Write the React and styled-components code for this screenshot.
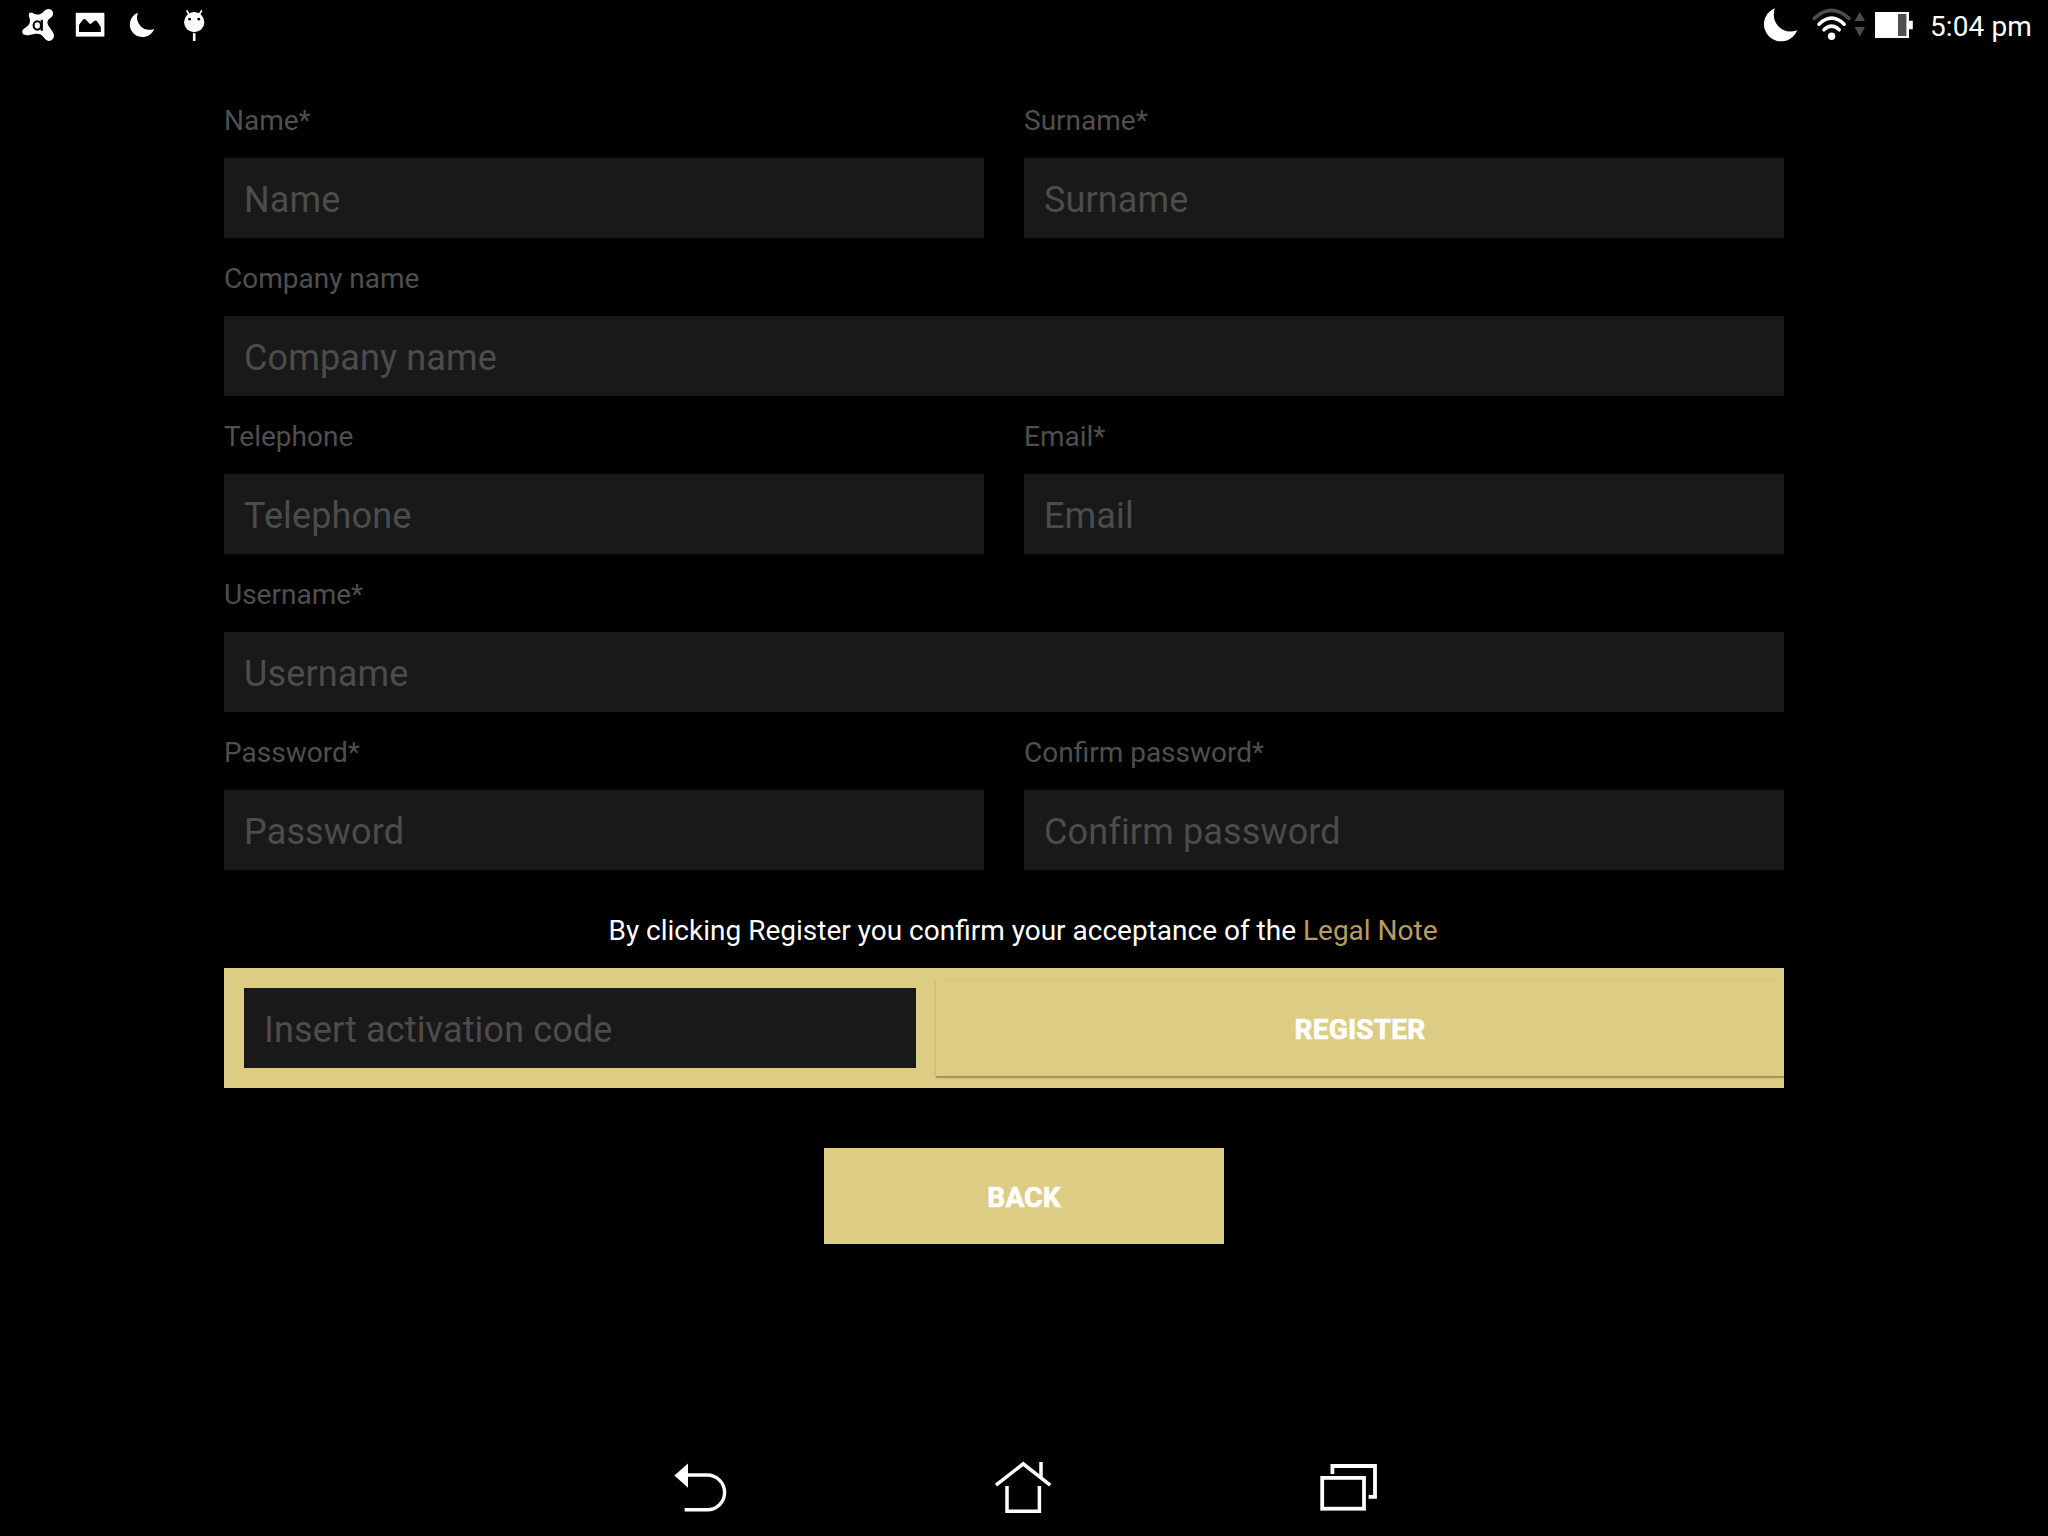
import React from "react";
import styled, { createGlobalStyle } from "styled-components";

const GlobalStyle = createGlobalStyle`
  * { box-sizing: border-box; }
  body { margin: 0; background: #000; font-family: Roboto, sans-serif; color: #fff; }
`;

const Screen = styled.div`
  width: 2048px;
  height: 1536px;
  background: #000;
  display: flex;
  flex-direction: column;
  overflow: hidden;
`;

const StatusBar = styled.header`
  height: 50px;
  flex: none;
  display: flex;
  justify-content: space-between;
  padding: 0 17px 0 12px;
`;

const Cluster = styled.div`
  display: flex;
`;

const Glyph = styled.svg`
  display: block;
  flex: none;
  width: ${(p) => p.$w}px;
  height: ${(p) => p.$h}px;
`;

const Clock = styled.time`
  width: 101px;
  font-size: 28px;
  line-height: 54px;
  letter-spacing: 0.1px;
  white-space: nowrap;
`;

const Content = styled.main`
  flex: 1;
  padding: 50px 224px 0;
`;

const Form = styled.form`
  display: flex;
  flex-direction: column;
`;

const Row = styled.div`
  display: flex;
  gap: 40px;
  width: 1560px;
  height: 158px;
`;

const Field = styled.label`
  flex: 1;
  display: flex;
  flex-direction: column;
  padding-top: 4px;
`;

const Caption = styled.span`
  height: 54px;
  font-size: 28px;
  line-height: 33px;
  color: #4f4f4f;
`;

const Input = styled.input`
  height: 80px;
  width: ${(p) => p.$w || "100%"};
  padding: 3px 20px 0;
  border: 0;
  border-radius: 0;
  outline: 0;
  background: #191919;
  color: #fff;
  font: 36px Roboto, sans-serif;
  letter-spacing: 0.14px;
  font-variant-ligatures: common-ligatures;
  &::placeholder { color: #4c4c4c; opacity: 1; }
`;

const Legal = styled.p`
  margin: 24px 0 0;
  height: 54px;
  width: 1598px;
  text-align: center;
  font-size: 28px;
  line-height: 33px;
  white-space: nowrap;
  color: #fff;
`;

const LegalLink = styled.a`
  color: #b89c60;
`;

const Activation = styled.div`
  display: flex;
  align-items: center;
  gap: 20px;
  width: 1560px;
  height: 120px;
  padding-left: 20px;
  background: #ddcc84;
  overflow: hidden;
`;

const Button = styled.button`
  width: ${(p) => p.$w}px;
  height: 96px;
  padding: 2px 0 0;
  border: 0;
  background: #ddcc84;
  color: #fff;
  font: 700 28px Roboto, sans-serif;
  letter-spacing: 0.2px;
  -webkit-text-stroke: 0.7px #fff;
  text-transform: uppercase;
  box-shadow: ${(p) => (p.$raised ? "0 2px 1px rgba(90,70,20,.34), 0 1px 3px rgba(90,70,20,.16)" : "none")};
`;

const BackRow = styled.div`
  display: flex;
  justify-content: center;
  width: 1600px;
  margin-top: 60px;
`;

const NavBar = styled.nav`
  flex: none;
  height: 96px;
  display: flex;
  gap: 245px;
  padding: 10px 0 0 660px;
`;

const rows = [
  [["Name*", "Name"], ["Surname*", "Surname"]],
  [["Company name", "Company name"]],
  [["Telephone", "Telephone"], ["Email*", "Email"]],
  [["Username*", "Username"]],
  [["Password*", "Password"], ["Confirm password*", "Confirm password"]],
];

const AvastIcon = () => (
  <Glyph $w={52} $h={50} viewBox="0 0 52 50">
    <path
      fill="#fff"
      d="M17.2 13.2C18.6 12 20.2 12.6 21.5 13.6C25 15.6 29 14.6 32 11.2C34.2 8.6 38 8.2 40 10.6C42 13.2 41 16.6 38.4 18C35 20 34.6 23 37 26.4C38.6 29 41.8 32 42 35.6C42 39 39.4 41.2 36.6 40.9C33 40.6 32 36.6 28.6 34.6C25.4 33 21.6 34.4 17.6 35C13.6 35.8 10.6 34.8 10.2 32C10 29.6 12 28.4 14 27.2C17.4 25 18.4 22.6 17.8 19C17.2 16.6 16.2 14.6 17.2 13.2Z"
    />
    <ellipse cx="25.3" cy="25.4" rx="3.7" ry="4.2" fill="none" stroke="#000" strokeWidth="2.1" />
    <path d="M29.8 19.8V30.8" stroke="#000" strokeWidth="2.2" />
  </Glyph>
);

const PictureIcon = () => (
  <Glyph $w={52} $h={50} viewBox="0 0 52 50">
    <rect x="11.8" y="12.8" width="28.6" height="23.8" fill="#fff" />
    <path d="M15 32V25L19 19.6Q20.2 18.4 21.6 19.6L26.2 24.2L30.6 20.8Q32 19.8 33.2 21.4L36.8 27V32Z" fill="#000" />
  </Glyph>
);

const SmallMoon = () => (
  <Glyph $w={52} $h={50} viewBox="0 0 52 50">
    <path d="M21.7 12.8A12.6 12.6 0 1 0 38.2 28.9Q30 31.6 24.6 26.2Q19.4 20.6 21.7 12.8Z" fill="#fff" />
  </Glyph>
);

const DroidIcon = () => (
  <Glyph $w={52} $h={50} viewBox="0 0 52 50">
    <path d="M18.6 10.4L21 14.4M33.8 10.4L31.4 14.4" stroke="#fff" strokeWidth="1.8" />
    <circle cx="26.2" cy="22.2" r="10.1" fill="#fff" />
    <circle cx="21.6" cy="19.2" r="1.4" />
    <circle cx="30.8" cy="19.2" r="1.4" />
    <path d="M26.2 33.2V41" stroke="#fff" strokeWidth="2.6" />
  </Glyph>
);

const StatusIcons = () => (
  <Glyph $w={170} $h={50} viewBox="1760 0 170 50">
    <path d="M1774.7 8.2A17.2 17.2 0 1 0 1797.2 30.3Q1786.2 34.2 1778.6 26.6Q1771.6 19 1774.7 8.2Z" fill="#fff" />
    <g fill="none" strokeLinecap="round" strokeWidth="3.5">
      <path d="M1814.2 18.4Q1831.6 2.4 1849 18.4" stroke="#4d4d4d" />
      <path d="M1819 24.2Q1831.6 12.2 1844.2 24.2" stroke="#fff" />
      <path d="M1824 29.8Q1831.6 22.6 1839.2 29.8" stroke="#fff" />
    </g>
    <circle cx="1831.6" cy="36.3" r="3.7" fill="#fff" />
    <path d="M1854.6 21L1859.8 11.8L1865 21ZM1854.6 27L1859.8 36.6L1865 27Z" fill="#4d4d4d" />
    <path d="M1875 12H1909V20.8H1912.8V29.2H1909V38H1875Z" fill="#fff" />
    <rect x="1898" y="14" width="8.4" height="22" fill="#4f4f4f" />
  </Glyph>
);

const BackIcon = () => (
  <Glyph $w={80} $h={80} viewBox="0 0 80 80">
    <path d="M14.4 25.6L28 13.4V37.8Z" fill="#fff" />
    <path d="M27 25H47.2A17.4 17.4 0 0 1 47.2 59.8H24.6" fill="none" stroke="#fff" strokeWidth="3.4" />
  </Glyph>
);

const HomeIcon = () => (
  <Glyph $w={80} $h={80} viewBox="0 0 80 80">
    <g fill="none" stroke="#fff" strokeWidth="3.5">
      <path d="M11 35.2L38.2 13.8L65.2 35.2M56 27V12" />
      <path d="M22 36V61.3H54.4V36" />
    </g>
  </Glyph>
);

const RecentsIcon = () => (
  <Glyph $w={80} $h={80} viewBox="0 0 80 80">
    <g fill="none" stroke="#fff" strokeWidth="3.8">
      <rect x="12.2" y="27.9" width="41.8" height="30.8" />
      <path d="M22.4 24V16H65V46.8H58.6" />
    </g>
  </Glyph>
);

export default function App() {
  return (
    <>
      <GlobalStyle />
      <Screen>
        <StatusBar>
          <Cluster>
            <AvastIcon />
            <PictureIcon />
            <SmallMoon />
            <DroidIcon />
          </Cluster>
          <Cluster>
            <StatusIcons />
            <Clock>5:04 pm</Clock>
          </Cluster>
        </StatusBar>
        <Content>
          <Form>
            {rows.map((row) => (
              <Row key={row[0][0]}>
                {row.map(([caption, hint]) => (
                  <Field key={caption}>
                    <Caption>{caption}</Caption>
                    <Input placeholder={hint} />
                  </Field>
                ))}
              </Row>
            ))}
            <Legal>
              By clicking Register you confirm your acceptance of the <LegalLink>Legal Note</LegalLink>
            </Legal>
            <Activation>
              <Input $w="672px" placeholder="Insert activation code" />
              <Button type="button" $w={848} $raised>Register</Button>
            </Activation>
            <BackRow>
              <Button type="button" $w={400}>Back</Button>
            </BackRow>
          </Form>
        </Content>
        <NavBar>
          <BackIcon />
          <HomeIcon />
          <RecentsIcon />
        </NavBar>
      </Screen>
    </>
  );
}
